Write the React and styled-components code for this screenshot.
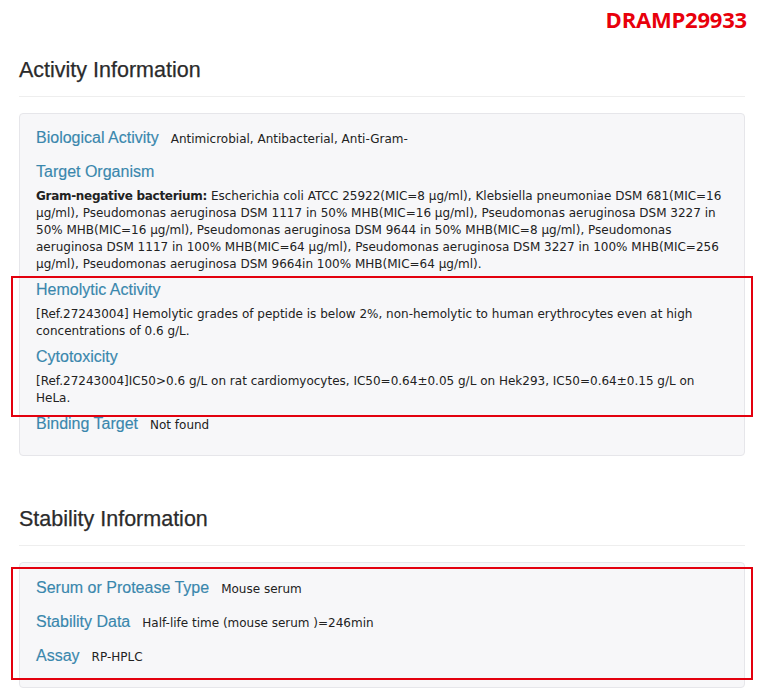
import React from "react";
import styled, { createGlobalStyle } from "styled-components";

const GlobalStyle = createGlobalStyle`
  body {
    margin: 0;
    background: #fff;
    color: #333;
    font-family: "DejaVu Sans", Verdana, sans-serif;
  }
`;

const Page = styled.div`
  padding: 0 19px 4px;
`;

const TopBar = styled.div`
  display: flex;
  justify-content: flex-end;
  height: 38px;
  margin-right: -2px;
`;

const AccessionId = styled.div`
  font-family: "Open Sans", "Noto Sans", sans-serif;
  font-weight: 700;
  font-size: 22px;
  line-height: 38px;
  color: #e8000b;
  letter-spacing: -0.2px;
`;

const SectionTitle = styled.h2`
  font-family: "Liberation Sans", Arial, sans-serif;
  font-weight: 400;
  font-size: 21.5px;
  line-height: 23px;
  color: #2b2b2b;
  -webkit-text-stroke: 0.25px #2b2b2b;
  margin: ${(p) => (p.$first ? "21px" : "52px")} 0 0;
  padding-bottom: 14px;
  border-bottom: 1px solid #eee;
`;

const Card = styled.div`
  margin-top: 16px;
  background: #f7f7f9;
  border: 1px solid #e6e6ea;
  border-radius: 4px;
  padding: 14px 16px 21px;
`;

const Highlight = styled.div`
  margin: ${(p) => p.$margin};
  border: 2px solid #e3000e;
  padding: ${(p) => p.$padding};
`;

const Row = styled.div`
  display: flex;
  align-items: baseline;
  height: 20px;
  margin-bottom: ${(p) => (p.$last ? "0" : "14px")};
`;

const Label = styled.h4`
  font-family: "Liberation Sans", Arial, sans-serif;
  font-weight: 400;
  font-size: 16px;
  line-height: 20px;
  color: #3a87ad;
  -webkit-text-stroke: 0.15px #3a87ad;
  margin: 0;
`;

const BlockLabel = styled(Label)`
  margin-bottom: 6px;
`;

const Value = styled.span`
  font-size: 12px;
  line-height: 20px;
  margin-left: 12px;
  color: #222;
`;

const Text = styled.p`
  font-size: 12px;
  line-height: 17px;
  color: #222;
  margin: 0 0 ${(p) => p.$after || "7px"};

  b {
    letter-spacing: -0.3px;
  }
`;

const Field = ({ label, children, after }) => (
  <div>
    <BlockLabel>{label}</BlockLabel>
    <Text $after={after}>{children}</Text>
  </div>
);

const InlineField = ({ label, value, last }) => (
  <Row $last={last}>
    <Label>{label}</Label>
    <Value>{value}</Value>
  </Row>
);

export default function App() {
  return (
    <Page>
      <GlobalStyle />
      <TopBar>
        <AccessionId>DRAMP29933</AccessionId>
      </TopBar>

      <SectionTitle $first>Activity Information</SectionTitle>
      <Card>
        <InlineField
          label="Biological Activity"
          value="Antimicrobial, Antibacterial, Anti-Gram-"
        />
        <Field label="Target Organism" after="3px">
          <b>Gram-negative bacterium:</b> Escherichia coli ATCC 25922(MIC=8
          μg/ml), Klebsiella pneumoniae DSM 681(MIC=16 μg/ml), Pseudomonas
          aeruginosa DSM 1117 in 50% MHB(MIC=16 μg/ml), Pseudomonas aeruginosa
          DSM 3227 in 50% MHB(MIC=16 μg/ml), Pseudomonas aeruginosa DSM 9644 in
          50% MHB(MIC=8 μg/ml), Pseudomonas aeruginosa DSM 1117 in 100%
          MHB(MIC=64 μg/ml), Pseudomonas aeruginosa DSM 3227 in 100%
          MHB(MIC=256 μg/ml), Pseudomonas aeruginosa DSM 9664in 100%
          MHB(MIC=64 μg/ml).
        </Field>
        <Highlight $margin="0 -25px -3px" $padding="2px 23px 8px">
          <Field label="Hemolytic Activity">
            [Ref.27243004] Hemolytic grades of peptide is below 2%,
            non-hemolytic to human erythrocytes even at high concentrations of
            0.6 g/L.
          </Field>
          <Field label="Cytotoxicity" after="0">
            [Ref.27243004]IC50&gt;0.6 g/L on rat cardiomyocytes,
            IC50=0.64±0.05 g/L on Hek293, IC50=0.64±0.15 g/L on HeLa.
          </Field>
        </Highlight>
        <InlineField label="Binding Target" value="Not found" last />
      </Card>

      <SectionTitle>Stability Information</SectionTitle>
      <Card>
        <Highlight $margin="-10px -25px -14px" $padding="9px 23px 12px">
          <InlineField label="Serum or Protease Type" value="Mouse serum" />
          <InlineField
            label="Stability Data"
            value="Half-life time (mouse serum )=246min"
          />
          <InlineField label="Assay" value="RP-HPLC" last />
        </Highlight>
      </Card>
    </Page>
  );
}
